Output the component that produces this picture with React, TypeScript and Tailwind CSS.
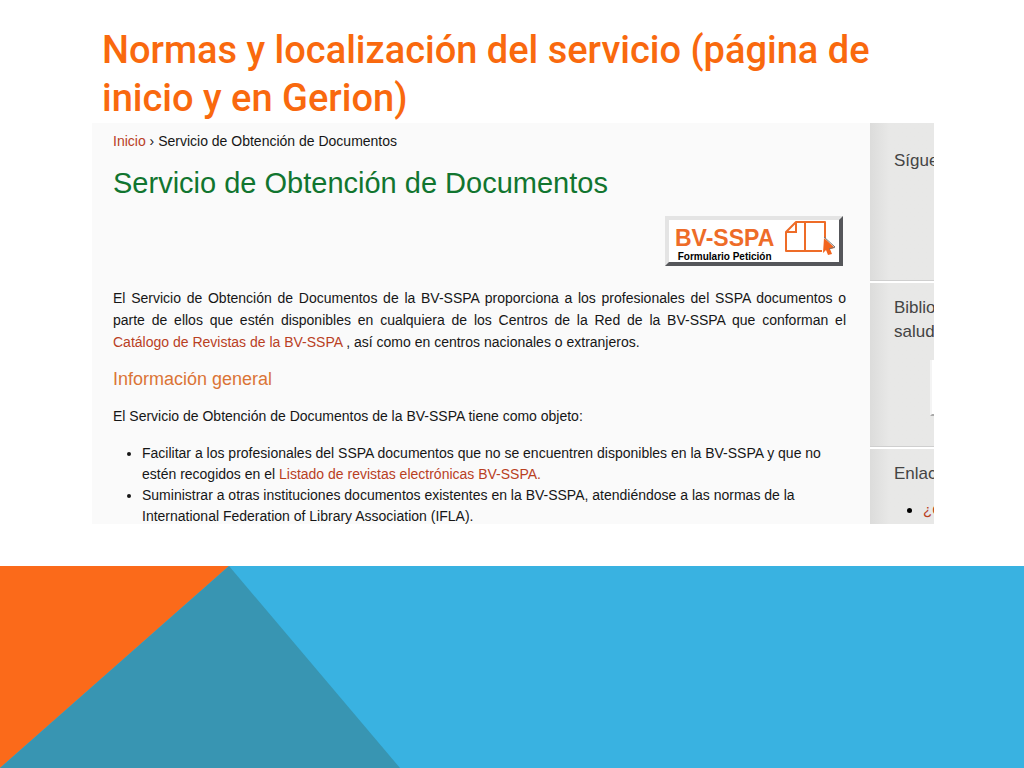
function FormLogo() {
  return (
    <svg width="52" height="36" viewBox="0 0 52 36" fill="none" aria-hidden="true">
      <path d="M41 18V2H12L2 12V31H38" stroke="#ee6c28" strokeWidth="2" strokeLinejoin="round" />
      <path d="M12 2V12H2M21 2V31" stroke="#ee6c28" strokeWidth="2" />
      <path d="M40 18L51 28L46 29L48 34L44 35L42 30L39 33Z" fill="#f2641e" />
      <path d="M40 17L51 27L45 29" stroke="#777" strokeWidth="1" />
    </svg>
  );
}

function Sidebar() {
  return (
    <aside className="flex w-16 shrink-0 flex-col overflow-hidden whitespace-nowrap bg-linear-to-r from-[#dcdcdb] to-[#e8e8e7] to-30% text-[17px] leading-6 text-[#444]">
      <section className="h-[158px] border-b border-[#cfcfcf] pt-[26px] pl-6">
        <h3>Sígue</h3>
      </section>
      <section className="h-[166px] border-t-2 border-b border-t-white border-b-[#cfcfcf] pt-[13px] pl-6">
        <h3>Biblio<br />salud</h3>
        <div className="mt-4 ml-9 h-14 border-b-2 border-l-2 border-b-[#aaa] border-l-[#f4f4f4] bg-white" />
      </section>
      <section className="grow border-t-2 border-white pt-[13px] pl-6">
        <h3>Enlac</h3>
        <ul className="mt-3 ml-[29px] list-disc text-[15px] marker:text-black">
          <li><a href="#enlaces" className="text-[#b9401f]">¿C</a></li>
        </ul>
      </section>
    </aside>
  );
}

export default function App() {
  return (
    <main className="flex min-h-screen flex-col bg-white font-['Liberation_Sans',Arial,sans-serif]">
      {/* TÍTULO */}
      <h1 className="pt-[26px] pr-[90px] pl-[102px] font-[Roboto,sans-serif] text-[38px] leading-12 font-medium text-[#f9690e]">
        Normas y localización del servicio (página de inicio y en Gerion)
      </h1>

      {/* PÁGINA DEL SERVICIO */}
      <div className="mt-px mr-[90px] ml-[92px] flex overflow-hidden bg-[#fafafa]">
        <article className="min-w-0 grow pt-[7px] pr-6 pl-[21px] text-sm leading-[22px] text-[#161616]">
          <nav>
            <a href="#inicio" className="text-[#b9401f]">Inicio</a> › Servicio de Obtención de Documentos
          </nav>
          <h2 className="mt-[13px] text-[29px] leading-9 text-[#11752f]">Servicio de Obtención de Documentos</h2>
          <div className="mt-[15px] flex justify-end pr-[3px]">
            <button
              type="button"
              className="flex h-[50px] w-[178px] items-start justify-between border-4 border-t-[#e4e4e4] border-r-[#55565a] border-b-[#55565a] border-l-[#e4e4e4] bg-white pr-[3px] pl-1.5"
            >
              <span className="flex flex-col items-center pt-1">
                <span className="text-[23px] leading-7 font-bold text-[#ee6c28]">BV-SSPA</span>
                <span className="text-[10px] leading-[10px] font-bold text-black">Formulario Petición</span>
              </span>
              <FormLogo />
            </button>
          </div>
          <p className="mt-[21px] text-justify">
            El Servicio de Obtención de Documentos de la BV-SSPA proporciona a los profesionales del SSPA documentos o
            parte de ellos que estén disponibles en cualquiera de los Centros de la Red de la BV-SSPA que conforman el{" "}
            <a href="#catalogo" className="text-[#b9401f]">Catálogo de Revistas de la BV-SSPA</a> , así como en centros
            nacionales o extranjeros.
          </p>
          <h3 className="mt-3.5 text-lg leading-6 text-[#db7436]">Información general</h3>
          <p className="mt-3.5">El Servicio de Obtención de Documentos de la BV-SSPA tiene como objeto:</p>
          <ul className="mt-4 -mb-[3px] list-disc pl-[29px] leading-[21px]">
            <li>
              Facilitar a los profesionales del SSPA documentos que no se encuentren disponibles en la BV-SSPA y que no
              estén recogidos en el{" "}
              <a href="#listado" className="text-[#b9401f]">Listado de revistas electrónicas BV-SSPA.</a>
            </li>
            <li>
              Suministrar a otras instituciones documentos existentes en la BV-SSPA, atendiéndose a las normas de la
              International Federation of Library Association (IFLA).
            </li>
          </ul>
        </article>
        <Sidebar />
      </div>

      {/* FRANJA INFERIOR */}
      <footer className="mt-[42px] flex grow bg-[#39b2e1]">
        <svg width="400" height="202" viewBox="0 0 400 202" preserveAspectRatio="none" aria-hidden="true">
          <path d="M0 0H229L0 202Z" fill="#fb6a1a" />
          <path d="M229 0L400 202H0Z" fill="#3895b2" />
        </svg>
      </footer>
    </main>
  );
}
